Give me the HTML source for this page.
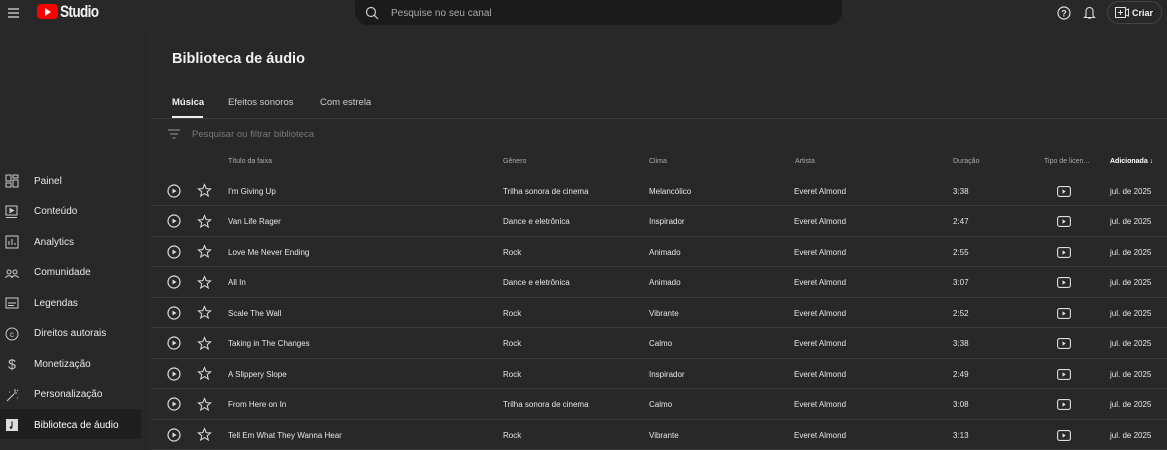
<!DOCTYPE html>
<html><head><meta charset="utf-8"><style>
*{margin:0;padding:0;box-sizing:border-box}
body{width:1167px;height:450px;overflow:hidden;background:#282828;font-family:"Liberation Sans",sans-serif;color:#f1f1f1;position:relative}
.abs{position:absolute}
.search{left:355px;top:0;width:487px;height:25px;background:#1b1b1b;border-radius:0 0 13px 13px}
.nav{left:0;height:30px;width:141px;font-size:10px;color:#e8e8e8}
.nav span{position:absolute;left:34px;top:10.5px}
.nav svg{position:absolute;left:5px;top:9px}
.sel{background:#1f1f1f}
.vline{left:150px;top:33px;width:1px;height:417px;background:#303030}
.row{left:152px;width:1015px;height:30.5px;border-bottom:1px solid #3a3a3a;font-size:8px;color:#e6e6e6}
.row div{position:absolute;top:11px}
.hdr{font-size:7px;color:#aaa}
</style></head><body>
<svg class="abs" style="left:7px;top:7px" width="14" height="12"><path d="M1 2h11M1 6h11M1 10h11" stroke="#ddd" stroke-width="1.2"/></svg>
<div class="abs" style="left:37px;top:4px;width:21px;height:15px;background:#f00;border-radius:4px"></div>
<svg class="abs" style="left:44px;top:8px" width="8" height="8"><path d="M1 0L7 4L1 8Z" fill="#fff"/></svg>
<div class="abs" style="left:60px;top:2px;font-size:17px;font-weight:bold;letter-spacing:-0.8px;transform:scaleX(0.8);transform-origin:left">Studio</div>
<div class="abs search"></div>
<svg class="abs" style="left:365px;top:6px" width="14" height="14"><circle cx="6" cy="6" r="4.5" stroke="#ccc" fill="none" stroke-width="1.2"/><path d="M9.3 9.3L13 13" stroke="#ccc" stroke-width="1.2"/></svg>
<div class="abs" style="left:391px;top:8px;font-size:10px;color:#aaa">Pesquise no seu canal</div>
<svg class="abs" style="left:1057px;top:6px" width="14" height="14"><circle cx="7" cy="7" r="6" stroke="#ddd" fill="none" stroke-width="1.2"/><text x="7" y="10.5" font-size="9" fill="#ddd" text-anchor="middle" font-family="Liberation Sans" font-weight="bold">?</text></svg>
<svg class="abs" style="left:1083px;top:5px" width="13" height="15"><path d="M3 11V6a3.5 3.5 0 0 1 7 0v5l1.5 1.5h-10Z M5.5 13.5h2" stroke="#ddd" fill="none" stroke-width="1.1"/></svg>
<div class="abs" style="left:1107px;top:1px;width:55px;height:23px;border:1px solid #444;border-radius:12px"></div>
<svg class="abs" style="left:1115px;top:7px" width="14" height="11"><rect x="0.5" y="0.5" width="10" height="10" stroke="#ddd" fill="none"/><path d="M5.5 3v5M3 5.5h5M11 3l2.5-1v7L11 8" stroke="#ddd" fill="none"/></svg>
<div class="abs" style="left:1132px;top:8px;font-size:9px;font-weight:bold">Criar</div>

<div class="abs vline"></div>
<div class="abs" style="left:172px;top:51px;font-size:14.5px;font-weight:bold">Biblioteca de áudio</div>
<div class="abs" style="left:172px;top:97px;font-size:9.5px;font-weight:bold">Música</div>
<div class="abs" style="left:172px;top:116px;width:31px;height:2px;background:#eee"></div>
<div class="abs" style="left:228px;top:97px;font-size:9.5px;color:#ccc">Efeitos sonoros</div>
<div class="abs" style="left:320px;top:97px;font-size:9.5px;color:#ccc">Com estrela</div>
<div class="abs" style="left:152px;top:118px;width:1015px;height:1px;background:#3d3d3d"></div>
<svg class="abs" style="left:168px;top:129px" width="12" height="10"><path d="M0 1h12M2 5h8M4.5 9h3" stroke="#999" stroke-width="1"/></svg>
<div class="abs" style="left:192px;top:129px;font-size:9.5px;color:#777">Pesquisar ou filtrar biblioteca</div>

<div class="abs hdr" style="left:228px;top:158px">Título da faixa</div>
<div class="abs hdr" style="left:503px;top:158px">Gênero</div>
<div class="abs hdr" style="left:649px;top:158px">Clima</div>
<div class="abs hdr" style="left:795px;top:158px">Artista</div>
<div class="abs hdr" style="left:953px;top:158px">Duração</div>
<div class="abs hdr" style="left:1044px;top:158px">Tipo de licen...</div>
<div class="abs hdr" style="left:1110px;top:158px;color:#fff;font-weight:bold">Adicionada ↓</div>

<div id="rows"></div>
<script>
const d=[["I'm Giving Up","Trilha sonora de cinema","Melancólico","3:38"],["Van Life Rager","Dance e eletrônica","Inspirador","2:47"],["Love Me Never Ending","Rock","Animado","2:55"],["All In","Dance e eletrônica","Animado","3:07"],["Scale The Wall","Rock","Vibrante","2:52"],["Taking in The Changes","Rock","Calmo","3:38"],["A Slippery Slope","Rock","Inspirador","2:49"],["From Here on In","Trilha sonora de cinema","Calmo","3:08"],["Tell Em What They Wanna Hear","Rock","Vibrante","3:13"]];
let h="";d.forEach((r,i)=>{const t=175.5+i*30.5;h+=`<div class="abs row" style="top:${t}px">
<svg style="position:absolute;left:15px;top:8px" width="14" height="14"><circle cx="7" cy="7" r="6" stroke="#ddd" fill="none" stroke-width="1.2"/><path d="M5.5 4.5L9.5 7L5.5 9.5Z" fill="#ddd"/></svg>
<svg style="position:absolute;left:45px;top:7.5px" width="15" height="15"><path d="M7.5 1.5L9.2 5.6L13.6 5.9L10.2 8.7L11.3 13L7.5 10.6L3.7 13L4.8 8.7L1.4 5.9L5.8 5.6Z" stroke="#ddd" fill="none" stroke-width="1"/></svg>
<div style="left:76px">${r[0]}</div><div style="left:351px">${r[1]}</div><div style="left:497px">${r[2]}</div><div style="left:642px">Everet Almond</div><div style="left:801px">${r[3]}</div>
<svg style="position:absolute;left:905px;top:10px" width="14" height="11"><rect x="0.6" y="0.6" width="12.8" height="9.8" rx="2" stroke="#ddd" fill="none" stroke-width="1.1"/><path d="M5.5 3.3L8.8 5.5L5.5 7.7Z" fill="#ddd"/></svg>
<div style="left:958px">jul. de 2025</div></div>`});
document.getElementById("rows").innerHTML=h;
</script>

<div class="abs nav" style="top:165px"><svg width="14" height="14"><path d="M1 1h5v6H1ZM8 1h5v3H8ZM1 9h5v4H1ZM8 6h5v7H8Z" stroke="#ccc" fill="none"/></svg><span>Painel</span></div>
<div class="abs nav" style="top:195.5px"><svg width="14" height="14"><rect x="1" y="1" width="11" height="9" stroke="#ccc" fill="none"/><path d="M5 3.5L8.5 5.5L5 7.5Z M1 12.5h11" fill="#ccc" stroke="#ccc"/></svg><span>Conteúdo</span></div>
<div class="abs nav" style="top:226px"><svg width="14" height="14"><rect x="1" y="1" width="12" height="12" stroke="#ccc" fill="none"/><path d="M4 10V6M7 10V4M10 10V8" stroke="#ccc"/></svg><span>Analytics</span></div>
<div class="abs nav" style="top:256.5px"><svg width="14" height="14"><circle cx="4" cy="6" r="2" stroke="#ccc" fill="none"/><circle cx="10" cy="6" r="2" stroke="#ccc" fill="none"/><path d="M0.5 12c1-3 6-3 7 0M6.5 12c1-3 6-3 7 0" stroke="#ccc" fill="none"/></svg><span>Comunidade</span></div>
<div class="abs nav" style="top:287px"><svg width="14" height="14"><rect x="1" y="2" width="12" height="10" stroke="#ccc" fill="none"/><path d="M3 7h8M3 9.5h6" stroke="#ccc"/></svg><span>Legendas</span></div>
<div class="abs nav" style="top:317.5px"><svg width="14" height="14"><circle cx="7" cy="7" r="6" stroke="#ccc" fill="none"/><text x="7" y="10" font-size="8" fill="#ccc" text-anchor="middle" font-family="Liberation Sans">c</text></svg><span>Direitos autorais</span></div>
<div class="abs nav" style="top:348px"><svg width="14" height="14"><text x="7" y="12" font-size="14" fill="#ccc" text-anchor="middle" font-family="Liberation Sans">$</text></svg><span>Monetização</span></div>
<div class="abs nav" style="top:378.5px"><svg width="14" height="14"><path d="M2 13L9 6M10 1v3M12 5h-3M12 2l1 1M4 4h1M12 10h1" stroke="#ccc"/></svg><span>Personalização</span></div>
<div class="abs nav sel" style="top:409px"><svg width="14" height="14"><rect x="1" y="1" width="12" height="12" fill="#ddd"/><path d="M7 3.5v5.5" stroke="#222" stroke-width="1.2"/><circle cx="6" cy="9.5" r="1.3" fill="#222"/></svg><span style="color:#fff">Biblioteca de áudio</span></div>
</body></html>
